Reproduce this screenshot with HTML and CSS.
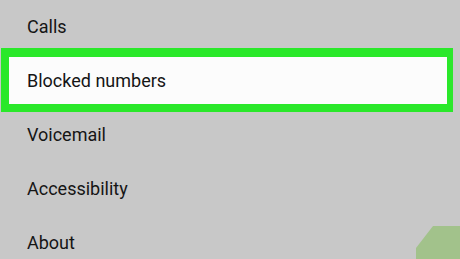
FILE: index.html
```html
<!DOCTYPE html>
<html>
<head>
<meta charset="utf-8">
<link rel="stylesheet" href="styles.css">
</head>
<body>
<div class="menu">
  <div class="row">Calls</div>
  <div class="row highlight">Blocked numbers</div>
  <div class="row">Voicemail</div>
  <div class="row">Accessibility</div>
  <div class="row">About</div>
</div>
<svg class="corner" width="50" height="39" viewBox="0 0 50 39">
  <polygon points="6,39 6,28 23,6 50,6 50,39" fill="#a2c28b"/>
</svg>
</body>
</html>
```
FILE: styles.css
```css
html, body {
  margin: 0;
  padding: 0;
  width: 460px;
  height: 259px;
  overflow: hidden;
  background: #c8c8c8;
}
body {
  position: relative;
  font-family: Roboto, "Noto Sans", sans-serif;
  font-size: 18px;
  color: #151515;
}
.menu {
  display: flex;
  flex-direction: column;
}
.row {
  height: 54px;
  line-height: 54px;
  padding-left: 27px;
  white-space: nowrap;
}
.highlight {
  height: 46px;
  line-height: 45px;
  padding-top: 1px;
  padding-left: 18px;
  margin: -6px 7px -4px 1px;
  background: #fcfcfc;
  border-style: solid;
  border-color: #2ae82a;
  border-width: 9px 6px 8px 8px;
}
.corner {
  position: absolute;
  left: 410px;
  top: 220px;
}
```
